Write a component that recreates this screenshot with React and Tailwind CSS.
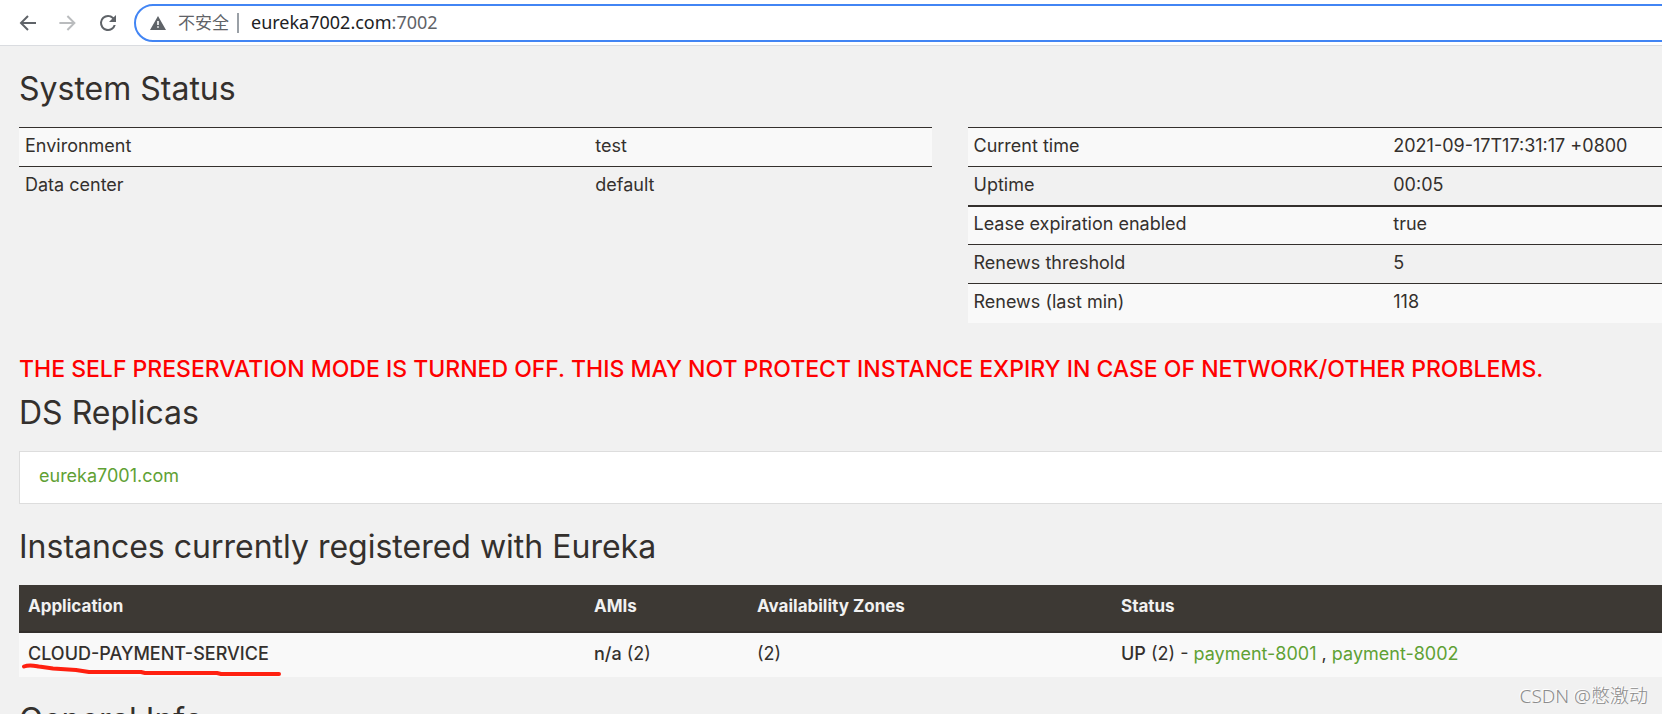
import { useState } from "react";

const generalStatus = [
  { label: "Environment", value: "test" },
  { label: "Data center", value: "default" },
];

const runtimeStatus = [
  { label: "Current time", value: "2021-09-17T17:31:17 +0800" },
  { label: "Uptime", value: "00:05" },
  { label: "Lease expiration enabled", value: "true", thick: true },
  { label: "Renews threshold", value: "5" },
  { label: "Renews (last min)", value: "118" },
];

const apps = [
  {
    name: "CLOUD-PAYMENT-SERVICE",
    amis: "n/a",
    count: 2,
    status: "UP",
    instances: ["payment-8001", "payment-8002"],
    marked: true,
  },
];

function BrowserBar() {
  const [host, setHost] = useState("eureka7002.com");

  return (
    <header className="flex h-[46px] items-center border-b border-[#dadce0] bg-white pl-4 font-['Noto_Sans','Noto_Sans_CJK_SC',sans-serif]">
      <div className="flex shrink-0 gap-4">
        <button type="button" aria-label="Back" className="size-6 text-[#5f6368]">
          <svg viewBox="0 0 24 24" className="size-6" fill="currentColor">
            <path d="M20 11H7.4l5.3-5.3L11.3 4.3 3.6 12l7.7 7.7 1.4-1.4L7.4 13H20z" />
          </svg>
        </button>
        <button type="button" aria-label="Forward" disabled className="size-6 text-[#babcbe]">
          <svg viewBox="0 0 24 24" className="size-6" fill="currentColor">
            <path d="M3.4 11H16l-5.3-5.3 1.4-1.4 7.7 7.7-7.7 7.7-1.4-1.4L16 13H3.4z" />
          </svg>
        </button>
        <button type="button" aria-label="Reload" className="size-6 text-[#5f6368]">
          <svg viewBox="0 0 24 24" className="size-6" fill="currentColor">
            <path d="M17.65 6.35A7.96 7.96 0 0 0 12 4a8 8 0 1 0 7.73 10h-2.08A6 6 0 1 1 12 6c1.66 0 3.14.69 4.22 1.78L13 11h7V4z" />
          </svg>
        </button>
      </div>

      <form
        onSubmit={(e) => e.preventDefault()}
        className="-mr-6 ml-[14px] flex h-[38px] flex-1 items-center rounded-full border-2 border-[#4285f4] pl-[14px] text-lg leading-6"
      >
        <svg viewBox="0 0 16 14" className="mr-3 h-[14px] w-4 text-[#5f6368]" fill="currentColor" aria-hidden="true">
          <path fillRule="evenodd" d="M8 0l8 14H0zM7.2 5v4h1.6V5zm0 5.2v1.6h1.6v-1.6z" />
        </svg>
        <span className="text-[17px] text-[#5f6368]">不安全</span>
        <span className="mr-3 ml-2 h-5 w-[2px] bg-[#9aa0a6]" />
        <input
          aria-label="Address"
          value={host}
          onChange={(e) => setHost(e.target.value)}
          className="field-sizing-content pb-[2px] text-[#202124] outline-none"
        />
        <span className="pb-[2px] text-[#5f6368]">:7002</span>
      </form>
    </header>
  );
}

function SectionTitle({ children }) {
  return <h1 className="text-[32px] leading-9 font-normal whitespace-nowrap">{children}</h1>;
}

function StatusTable({ rows, labelWidth }) {
  return (
    <table className="w-full table-fixed self-start text-left">
      <colgroup>
        <col className={labelWidth} />
        <col />
      </colgroup>
      <tbody>
        {rows.map((row) => (
          <tr
            key={row.label}
            className={`h-[39px] border-[#34302d] odd:bg-[#f9f9f9] ${row.thick ? "border-t-2" : "border-t"}`}
          >
            <th scope="row" className="px-[6px] pb-[2px] font-normal">{row.label}</th>
            <td className="px-[6px] pb-[2px]">{row.value}</td>
          </tr>
        ))}
      </tbody>
    </table>
  );
}

function InstancesTable() {
  return (
    <table className="w-full table-fixed text-left">
      <colgroup>
        <col className="w-[566px]" />
        <col className="w-[163px]" />
        <col className="w-[364px]" />
        <col />
      </colgroup>
      <thead>
        <tr className="h-[47px] border-b-2 border-[#34302d] bg-[#3d3934] text-[17px] text-[#f1f1f1]">
          <th className="px-[9px] pb-1 font-bold">Application</th>
          <th className="px-[9px] pb-1 font-bold">AMIs</th>
          <th className="px-[9px] pb-1 font-bold">Availability Zones</th>
          <th className="px-[9px] pb-1 font-bold">Status</th>
        </tr>
      </thead>
      <tbody>
        {apps.map((app) => (
          <tr key={app.name} className="h-[45px] bg-[#f9f9f9]">
            <td className="relative px-[9px] pb-[2px] font-medium">
              {app.name}
              {app.marked && (
                <svg
                  viewBox="0 0 262 16"
                  className="absolute top-[30px] left-[2px] h-4 w-[262px]"
                  fill="none"
                  stroke="#ff2010"
                  strokeWidth="4"
                  strokeLinecap="round"
                  strokeLinejoin="round"
                  aria-hidden="true"
                >
                  <path d="M3 3.5 C8 1.5 12 2.5 18 3.5 L32 5.5 L55 7 L68 9 L120 9 L124 10 L196 10 L200 11 L258 11" />
                </svg>
              )}
            </td>
            <td className="px-[9px] pb-[2px]">
              <span className="font-medium">{app.amis}</span> ({app.count})
            </td>
            <td className="px-[9px] pb-[2px]">({app.count})</td>
            <td className="px-[9px] pb-[2px]">
              <span className="font-medium">{app.status}</span> ({app.count}) -{" "}
              {app.instances.map((name, i) => (
                <span key={name}>
                  {i > 0 && " , "}
                  <a href="#" className="text-[#5fa134]">{name}</a>
                </span>
              ))}
            </td>
          </tr>
        ))}
      </tbody>
    </table>
  );
}

export default function App() {
  return (
    <div className="relative h-screen overflow-hidden bg-[#f1f1f1] font-['Inter',sans-serif] text-lg leading-6 text-[#34302d]">
      <BrowserBar />

      <div className="pt-[25px] pl-[19px]">
        {/* the dashboard is wider than the window and runs off its right edge */}
        <main className="w-[calc(100%+218px)]">
          <SectionTitle>System Status</SectionTitle>
          <div className="mt-5 grid grid-cols-2 gap-9">
            <StatusTable rows={generalStatus} labelWidth="w-5/8" />
            <StatusTable rows={runtimeStatus} labelWidth="w-[46%]" />
          </div>

          <h4 className="mt-8 text-[23px] leading-7 font-medium whitespace-nowrap text-[#ff0000]">
            THE SELF PRESERVATION MODE IS TURNED OFF. THIS MAY NOT PROTECT INSTANCE EXPIRY IN CASE OF NETWORK/OTHER PROBLEMS.
          </h4>

          <div className="mt-3 mb-5">
            <SectionTitle>DS Replicas</SectionTitle>
          </div>
          <ul className="border border-[#dddddd] bg-white px-[19px] pt-3 pb-[15px]">
            <li>
              <a href="#" className="text-[#5fa134]">eureka7001.com</a>
            </li>
          </ul>

          <div className="mt-[25px] mb-5">
            <SectionTitle>Instances currently registered with Eureka</SectionTitle>
          </div>
          <InstancesTable />

          <div className="mt-[25px]">
            <SectionTitle>General Info</SectionTitle>
          </div>
        </main>
      </div>

      <p className="absolute right-[14px] bottom-1 font-['Noto_Sans','Noto_Sans_CJK_SC',sans-serif] text-[19px] leading-7 font-light text-[#8c8c8c] [text-shadow:-1px_-1px_0_#ffffff]">
        CSDN @憋激动
      </p>
    </div>
  );
}
